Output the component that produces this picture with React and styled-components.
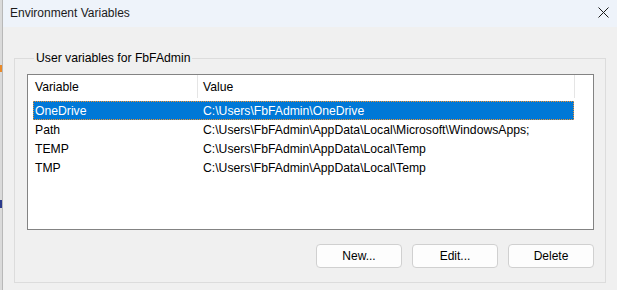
import React from "react";
import styled, { createGlobalStyle } from "styled-components";

const GlobalStyle = createGlobalStyle`
  html, body {
    margin: 0;
    padding: 0;
    background: #f0f0f0;
  }
  body {
    font-family: "Liberation Sans", Arial, sans-serif;
    font-size: 12.2px;
    color: #000;
  }
`;

const Screen = styled.div`
  display: flex;
  width: 617px;
  height: 290px;
  overflow: hidden;
`;

const BehindStrip = styled.div`
  display: flex;
  flex-direction: column;
  width: 2px;
  flex-shrink: 0;
  background: #dadada;
`;

const Mark = styled.div`
  margin-top: ${(p) => p.top}px;
  height: ${(p) => p.h}px;
  background: ${(p) => p.color};
`;

const Dialog = styled.div`
  flex: 1;
  display: flex;
  flex-direction: column;
  border-left: 1px solid #b8b8b8;
  background: #f0f0f0;
`;

const TitleBar = styled.div`
  height: 27px;
  flex-shrink: 0;
  display: flex;
  align-items: center;
  justify-content: space-between;
  padding: 0 8px 2px 7px;
  background: #eef3fa;
  box-sizing: border-box;
`;

const Title = styled.span`
  font-size: 12px;
  color: #1a1a1a;
`;

const CloseIcon = styled.svg`
  width: 11px;
  height: 11px;
`;

const Body = styled.div`
  flex: 1;
  padding: 23px 11px 7px 11px;
`;

const Group = styled.fieldset`
  margin: 0;
  padding: 8px 11px 14px 12px;
  border: 1px solid #dcdcdc;
  height: 100%;
  box-sizing: border-box;
  display: flex;
  flex-direction: column;
  min-width: 0;
`;

const GroupLabel = styled.legend`
  margin-left: 7px;
  padding: 0 2px 0 2px;
  font-size: 12.2px;
  line-height: 16px;
`;

const ListView = styled.div`
  height: 156px;
  box-sizing: border-box;
  border: 1px solid #838383;
  background: #fff;
  display: flex;
  flex-direction: column;
`;

const Header = styled.div`
  display: flex;
  height: 23px;
  align-items: stretch;
`;

const HeaderCell = styled.div`
  display: flex;
  align-items: center;
  width: ${(p) => p.w}px;
  padding-left: ${(p) => p.pad}px;
  box-sizing: border-box;
  border-right: 1px solid #e5e5e5;
`;

const Rows = styled.div`
  margin: 3px 0 0 5px;
  width: 541px;
  display: flex;
  flex-direction: column;
`;

const Row = styled.div`
  display: flex;
  height: 19px;
  align-items: center;
  box-sizing: border-box;
  color: ${(p) => (p.selected ? "#fff" : "#000")};
  background: ${(p) => (p.selected ? "#0078d7" : "transparent")};
  border: 1px dotted ${(p) => (p.selected ? "#f0922e" : "transparent")};
`;

const Cell = styled.div`
  width: ${(p) => (p.w ? `${p.w}px` : "auto")};
  flex-shrink: 0;
  padding-left: ${(p) => p.pad}px;
  box-sizing: border-box;
  white-space: nowrap;
`;

const ButtonBar = styled.div`
  display: flex;
  justify-content: flex-end;
  gap: 10px;
  margin-top: 14px;
`;

const Button = styled.button`
  width: 86px;
  height: 24px;
  font-family: "Liberation Sans", Arial, sans-serif;
  font-size: 12px;
  color: #000;
  background: #fdfdfd;
  border: 1px solid #d0d0d0;
  border-radius: 4px;
  padding: 0;
`;

const vars = [
  { name: "OneDrive", value: "C:\\Users\\FbFAdmin\\OneDrive", selected: true },
  { name: "Path", value: "C:\\Users\\FbFAdmin\\AppData\\Local\\Microsoft\\WindowsApps;" },
  { name: "TEMP", value: "C:\\Users\\FbFAdmin\\AppData\\Local\\Temp" },
  { name: "TMP", value: "C:\\Users\\FbFAdmin\\AppData\\Local\\Temp" },
];

const App = () => {
  return (
    <Screen>
      <GlobalStyle />
      <BehindStrip>
        <Mark top={65} h={7} color="#e98a2a" />
        <Mark top={128} h={8} color="#2b3a8c" />
      </BehindStrip>
      <Dialog>
        <TitleBar>
          <Title>Environment Variables</Title>
          <CloseIcon viewBox="0 0 11 11">
            <path d="M0.5 0.5 L10.5 10.5 M10.5 0.5 L0.5 10.5" stroke="#1a1a1a" strokeWidth="1" />
          </CloseIcon>
        </TitleBar>
        <Body>
          <Group>
            <GroupLabel>User variables for FbFAdmin</GroupLabel>
            <ListView>
              <Header>
                <HeaderCell w={170} pad={7}>Variable</HeaderCell>
                <HeaderCell w={377} pad={5}>Value</HeaderCell>
              </Header>
              <Rows>
                {vars.map((v) => (
                  <Row key={v.name} selected={v.selected}>
                    <Cell w={163} pad={1}>{v.name}</Cell>
                    <Cell pad={6}>{v.value}</Cell>
                  </Row>
                ))}
              </Rows>
            </ListView>
            <ButtonBar>
              <Button>New...</Button>
              <Button>Edit...</Button>
              <Button>Delete</Button>
            </ButtonBar>
          </Group>
        </Body>
      </Dialog>
    </Screen>
  );
};

export default App;
